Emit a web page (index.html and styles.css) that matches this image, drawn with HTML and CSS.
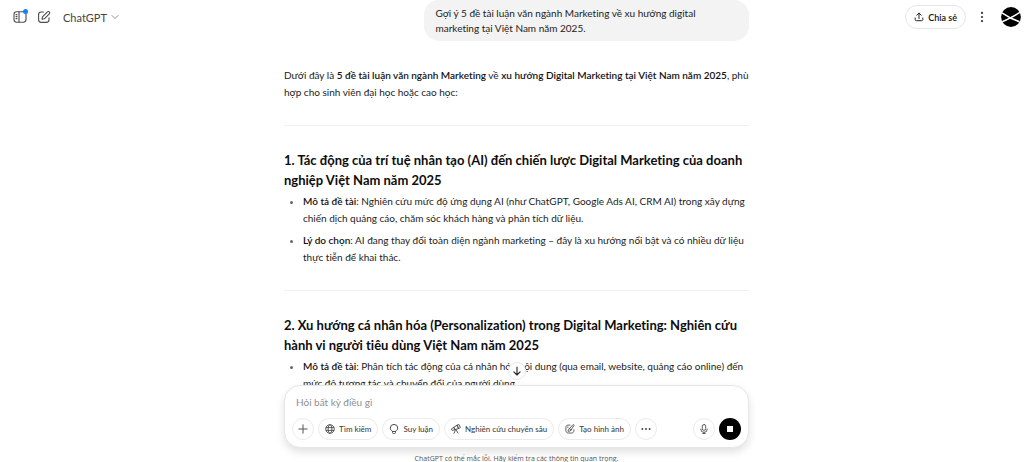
FILE: index.html
```html
<!DOCTYPE html>
<html lang="vi">
<head>
<meta charset="utf-8">
<meta name="viewport" content="width=device-width, initial-scale=1">
<title>ChatGPT</title>
<link rel="stylesheet" href="styles.css">
</head>
<body>
<div class="app">
  <header class="topbar">
    <div class="group">
      <button class="icon-btn sidebar-btn" aria-label="Mở thanh bên">
        <svg width="14" height="14" viewBox="0 0 14 14" fill="none" stroke="#4d4d4d" stroke-width="1.1"><rect x="1" y="1.8" width="12" height="10.4" rx="2.6"/><path d="M6 1.8v10.4M2.6 4.6h1.8M2.6 6.6h1.8M2.6 8.6h1.8"/></svg>
        <span class="dot"></span>
      </button>
      <button class="icon-btn" aria-label="Đoạn chat mới">
        <svg width="14" height="14" viewBox="0 0 14 14" fill="none" stroke="#4d4d4d" stroke-width="1.1" stroke-linecap="round" stroke-linejoin="round"><path d="M6.4 2H4.2C2.6 2 1.6 3 1.6 4.6v5.2c0 1.6 1 2.6 2.6 2.6h5.2c1.6 0 2.6-1 2.6-2.6V7.8"/><path d="M5 9.2l.4-2.3 5-5a1.3 1.3 0 0 1 1.9 1.9l-5 5z"/></svg>
      </button>
      <button class="model">ChatGPT
        <svg width="8" height="8" viewBox="0 0 8 8" fill="none" stroke="#8f8f8f" stroke-linecap="round" stroke-linejoin="round"><path d="M1 2.5l3 3 3-3"/></svg>
      </button>
    </div>
    <div class="group">
      <button class="share">
        <svg width="10" height="10" viewBox="0 0 10 10" fill="none" stroke="#222" stroke-linecap="round" stroke-linejoin="round"><path d="M5 6.5V1.2M2.8 3.2L5 1.1l2.2 2.1M1.2 6v1.5c0 .8.5 1.2 1.2 1.2h5.2c.7 0 1.2-.4 1.2-1.2V6"/></svg>
        Chia sẻ
      </button>
      <button class="icon-btn more" aria-label="Tùy chọn">
        <svg width="12" height="12" viewBox="0 0 12 12" fill="#333"><circle cx="6" cy="1.9" r="1.1"/><circle cx="6" cy="6" r="1.1"/><circle cx="6" cy="10.1" r="1.1"/></svg>
      </button>
      <button class="icon-btn avatar" aria-label="Tài khoản">
        <svg width="20" height="20" viewBox="0 0 20 20"><circle cx="10" cy="10" r="9.9"/><path d="M1 5.8Q10 12 18.6 14.7M1.2 14.7Q8 12 19 5.4" fill="none" stroke="#fff" stroke-width="1.5"/></svg>
      </button>
    </div>
  </header>

  <main class="thread">
    <div class="column">
      <div class="bubble">Gợi ý 5 đề tài luận văn ngành Marketing về xu hướng digital marketing tại Việt Nam năm 2025.</div>
      <article class="answer">
        <p>Dưới đây là <strong>5 đề tài luận văn ngành Marketing</strong> về <strong>xu hướng Digital Marketing tại Việt Nam năm 2025</strong>, phù hợp cho sinh viên đại học hoặc cao học:</p>
        <hr>
        <h3>1. Tác động của trí tuệ nhân tạo (AI) đến chiến lược Digital Marketing của doanh nghiệp Việt Nam năm 2025</h3>
        <ul>
          <li><strong>Mô tả đề tài</strong>: Nghiên cứu mức độ ứng dụng AI (như ChatGPT, Google Ads AI, CRM AI) trong xây dựng chiến dịch quảng cáo, chăm sóc khách hàng và phân tích dữ liệu.</li>
          <li><strong>Lý do chọn</strong>: AI đang thay đổi toàn diện ngành marketing – đây là xu hướng nổi bật và có nhiều dữ liệu thực tiễn để khai thác.</li>
        </ul>
        <hr>
        <h3>2. Xu hướng cá nhân hóa (Personalization) trong Digital Marketing: Nghiên cứu hành vi người tiêu dùng Việt Nam năm 2025</h3>
        <ul>
          <li><strong>Mô tả đề tài</strong>: Phân tích tác động của cá nhân hóa nội dung (qua email, website, quảng cáo online) đến mức độ tương tác và chuyển đổi của người dùng.</li>
        </ul>
      </article>
    </div>
  </main>

  <footer class="dock">
    <form class="composer">
      <button type="button" class="scroll-down" aria-label="Cuộn xuống">
        <svg width="10" height="10" viewBox="0 0 10 10" fill="none" stroke="#222" stroke-width="1.1" stroke-linecap="round" stroke-linejoin="round"><path d="M5 1v8M1.9 5.9L5 9l3.1-3.1"/></svg>
      </button>
      <input class="prompt" type="text" aria-label="Hỏi bất kỳ điều gì" placeholder="Hỏi bất kỳ điều gì">
      <div class="tools">
        <button type="button" class="tool round" aria-label="Thêm">
          <svg width="10" height="10" viewBox="0 0 10 10" fill="none" stroke="#555" stroke-linecap="round"><path d="M5 .8v8.4M.8 5h8.4"/></svg>
        </button>
        <button type="button" class="tool">
          <svg width="10" height="10" viewBox="0 0 10 10" fill="none" stroke="#4d4d4d" stroke-width=".9"><circle cx="5" cy="5" r="4.3"/><ellipse cx="5" cy="5" rx="1.9" ry="4.3"/><path d="M.9 3.6h8.2M.9 6.4h8.2"/></svg>
          Tìm kiếm
        </button>
        <button type="button" class="tool">
          <svg width="10" height="10" viewBox="0 0 10 10" fill="none" stroke="#4d4d4d" stroke-linecap="round"><path d="M3.4 7.3C2 6.5 1.3 5.5 1.3 4.1a3.7 3.7 0 0 1 7.4 0c0 1.4-.7 2.4-2.1 3.2zM3.5 7.4v1.2c0 .6.4.9.9.9h1.2c.5 0 .9-.3.9-.9V7.4"/></svg>
          Suy luận
        </button>
        <button type="button" class="tool">
          <svg width="10" height="10" viewBox="0 0 10 10" fill="none" stroke="#4d4d4d" stroke-width=".9" stroke-linecap="round" stroke-linejoin="round"><path d="M6.2 1.1l1.8-.6 1.4 3.1-1.7.9zM3 3.1l3.2-2 1.5 3.4-3.6 1.1zM.7 4.7L3 3.2l1.1 2.4-2.6.8zM4.6 5.6L3 9.4M5 5.5l2 3.6"/></svg>
          Nghiên cứu chuyên sâu
        </button>
        <button type="button" class="tool">
          <svg width="10" height="10" viewBox="0 0 10 10" fill="none" stroke="#4d4d4d" stroke-width=".9" stroke-linecap="round" stroke-linejoin="round"><path d="M5 1.1H3.2C1.8 1.1.9 2 .9 3.3v3.4C.9 8 1.8 9 3.2 9h3.5C8 9 8.9 8 8.9 6.7V5.6M4.2 4.8l3.7-4c.5-.5 1.4.2 1 .9L6 5.9M5.9 5.9c-.1 1.2-1.2 1.6-3.1 1.2.8-.6.3-1.9 1.4-2.3.9-.2 1.6.3 1.7 1.1zM2.5 3.1h.6"/></svg>
          Tạo hình ảnh
        </button>
        <button type="button" class="tool round" aria-label="Thêm công cụ">
          <svg width="10" height="10" viewBox="0 0 10 10" fill="#444"><circle cx="1.4" cy="5" r="1"/><circle cx="5" cy="5" r="1"/><circle cx="8.6" cy="5" r="1"/></svg>
        </button>
        <span class="spacer"></span>
        <button type="button" class="tool round" aria-label="Đọc chính tả">
          <svg width="10" height="10" viewBox="0 0 10 10" fill="none" stroke="#4d4d4d" stroke-width=".9" stroke-linecap="round"><rect x="3.3" y=".5" width="3.4" height="5.9" rx="1.7"/><path d="M1.7 5.1a3.3 3.3 0 0 0 6.6 0M5 8.4v1.2M3.7 9.6h2.6"/></svg>
        </button>
        <button type="button" class="tool round stop" aria-label="Dừng"><span class="square"></span></button>
      </div>
    </form>
    <p class="note">ChatGPT có thể mắc lỗi. Hãy kiểm tra các thông tin quan trọng.</p>
  </footer>
</div>
</body>
</html>
```
FILE: styles.css
```css
* { box-sizing: border-box; }
body {
  margin: 0;
  background: #fff;
  color: #111;
  font: 10px/17px Lato, "Noto Sans", sans-serif;
  font-variant-ligatures: none;
}
button {
  border: 0;
  padding: 0;
  background: none;
  color: inherit;
  font: inherit;
  font-variant-ligatures: none;
  display: flex;
  align-items: center;
  justify-content: center;
}
svg { display: block; flex: none; }
.app {
  height: 100vh;
  display: flex;
  flex-direction: column;
  position: relative;
}
.topbar {
  position: absolute;
  top: 0;
  left: 0;
  right: 0;
  height: 34px;
  padding: 0 3px 0 13px;
  display: flex;
  justify-content: space-between;
  align-items: center;
  pointer-events: none;
}
.group { display: flex; align-items: center; gap: 10px; pointer-events: auto; }
.icon-btn { position: relative; }
.dot {
  position: absolute;
  top: -1px;
  right: -1px;
  width: 5px;
  height: 5px;
  border-radius: 50%;
  background: #0a84ff;
}
.model { gap: 4px; font-size: 11px; color: #444; margin-left: 2px; }
.share {
  height: 24px;
  padding: 0 8px;
  gap: 4px;
  border: 1px solid #e6e6e6;
  border-radius: 12px;
  font-size: 9px;
  font-weight: 600;
}
.avatar { margin-left: 3px; }
.thread { flex: 1; min-height: 0; overflow: hidden; }
.thread, .dock { padding-left: 9px; }
.column, .composer { width: 100%; max-width: 465px; margin: 0 auto; }
.bubble {
  width: fit-content;
  max-width: 70%;
  margin-left: auto;
  padding: 6px 12px 5px;
  border-radius: 15px;
  background: #f3f3f3;
  color: #222;
  line-height: 15px;
}
.answer { padding-top: 26px; color: #222; }
.answer p, .answer h3, .answer ul { margin: 0; }
.answer strong { font-weight: 600; color: #111; }
.answer hr { margin: 24px 0; border: 0; border-top: 1px solid #f1f1f1; }
.answer h3 { font-size: 13px; line-height: 20px; font-weight: 700; color: #0d0d0d; }
.answer ul { margin-top: 3px; padding-left: 19px; }
.answer li + li { margin-top: 5px; }
.answer li::marker { color: #666; }
.composer {
  position: relative;
  padding: 8px 7px 7px;
  border: 1px solid #e6e6e6;
  border-radius: 16px;
  background: #fff;
  box-shadow: 0 4px 9px rgba(0, 0, 0, .12);
}
.scroll-down {
  position: absolute;
  bottom: calc(100% + 6px);
  left: 50%;
  margin-left: -9px;
  width: 18px;
  height: 18px;
  border: 1px solid #e8e8e8;
  border-radius: 50%;
  background: #fff;
}
.prompt {
  display: block;
  width: 100%;
  height: 16px;
  padding: 0 4px;
  border: 0;
  outline: 0;
  background: none;
  font: inherit;
}
.prompt::placeholder { color: #8f8f8f; opacity: 1; }
.tools { display: flex; align-items: center; gap: 4px; margin-top: 8px; }
.tool {
  height: 22px;
  padding: 0 6px;
  gap: 4px;
  border: 1px solid #ebebeb;
  border-radius: 11px;
  color: #444;
  font-size: 8px;
  font-weight: 500;
  white-space: nowrap;
}
.round { width: 22px; padding: 0; }
.spacer { flex: 1; }
.stop { border: 0; background: #000; }
.square { width: 6px; height: 6px; background: #fff; }
.note {
  margin: 0;
  padding-top: 3px;
  height: 14px;
  line-height: 15px;
  font-family: "Open Sans", "Noto Sans", sans-serif;
  font-size: 7px;
  color: #555;
  text-align: center;
}
```
